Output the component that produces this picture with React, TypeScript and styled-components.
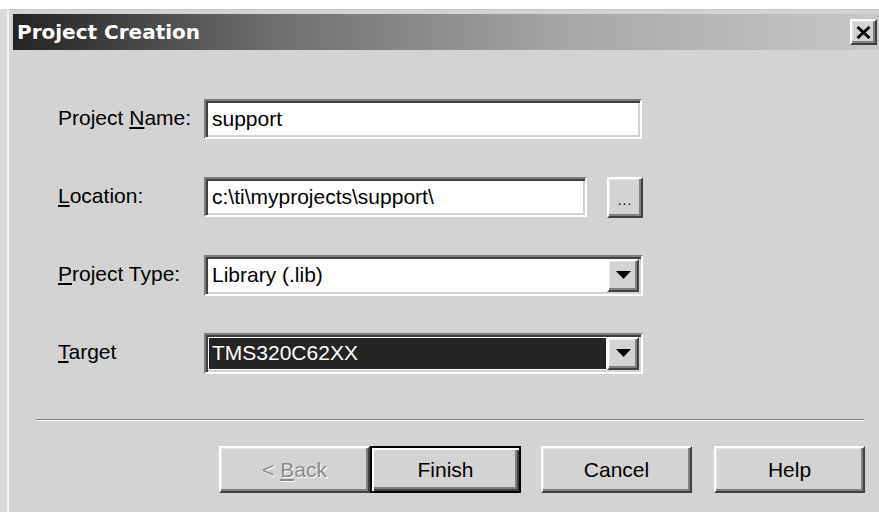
import React from "react";
import styled, { createGlobalStyle, css } from "styled-components";

const GlobalStyle = createGlobalStyle`
  html, body {
    margin: 0;
    padding: 0;
  }
  body {
    width: 879px;
    height: 512px;
    overflow: hidden;
    background: linear-gradient(#ffffff 0 9px, #d9d9d9 9px);
    font-family: "Liberation Sans", Arial, sans-serif;
    font-size: 21px;
    color: #000;
  }
`;

const face = "#d3d3d3";

const raised = css`
  border: 2px solid;
  border-color: #ffffff #404040 #404040 #ffffff;
  box-shadow: inset -2px -2px 0 #808080, inset 1px 1px 0 #e4e4e4;
  background: ${face};
`;

const sunken = css`
  border: 2px solid;
  border-color: #7c7c7c #ffffff #ffffff #7c7c7c;
  box-shadow: inset 2px 2px 0 #404040, inset -2px -2px 0 ${face};
`;

const Window = styled.div`
  box-sizing: border-box;
  width: 876px;
  height: 503px;
  margin: 0 0 0 7px;
  border-top: 1px solid #c6c6c6;
  border-left: 2px solid #f4f4f4;
  padding: 4px 3px 0 4px;
  background: ${face};
  position: relative;
  top: 9px;
`;

const TitleBar = styled.div`
  height: 36px;
  display: flex;
  align-items: center;
  justify-content: space-between;
  padding: 0 3px 0 4px;
  background: linear-gradient(to right, #232323 0%, #6e6e6e 30%, #a8a8a8 65%, #c8c8c8 100%);
`;

const TitleText = styled.span`
  font-family: "DejaVu Sans", Verdana, sans-serif;
  font-weight: bold;
  font-size: 20px;
  color: #ffffff;
  letter-spacing: 0;
  line-height: 1;
`;

const CloseButton = styled.div`
  ${raised};
  box-sizing: border-box;
  width: 27px;
  height: 26px;
  display: flex;
  align-items: center;
  justify-content: center;
`;

const DialogBody = styled.div`
  padding-top: 49px;
`;

const Form = styled.div`
  display: grid;
  grid-template-columns: 146px 439px;
  grid-auto-rows: 40px;
  row-gap: 38px;
  align-items: center;
  padding-left: 45px;
`;

const Label = styled.span`
  white-space: nowrap;
  margin-top: -3px;
`;

const TextBox = styled.div<{ $width: number }>`
  ${sunken};
  box-sizing: border-box;
  width: ${(p) => p.$width}px;
  height: 40px;
  background: #ffffff;
  display: flex;
  align-items: center;
  padding-left: 6px;
  white-space: nowrap;
`;

const FieldRow = styled.div`
  display: flex;
  align-items: center;
  gap: 20px;
`;

const BrowseButton = styled.div`
  ${raised};
  box-sizing: border-box;
  width: 36px;
  height: 41px;
  display: flex;
  justify-content: center;
  align-items: center;
  padding-top: 6px;
  font-size: 14px;
  letter-spacing: 1px;
`;

const Combo = styled.div`
  ${sunken};
  box-sizing: border-box;
  width: 439px;
  height: 41px;
  background: #ffffff;
  display: flex;
  align-items: stretch;
  padding: 2px;
`;

const ComboValue = styled.div<{ $selected?: boolean }>`
  flex: 1;
  margin: 1px;
  display: flex;
  align-items: center;
  padding-left: 3px;
  white-space: nowrap;
  ${(p) =>
    p.$selected &&
    css`
      background: #242424;
      color: #ffffff;
    `}
`;

const DropButton = styled.div`
  ${raised};
  box-sizing: border-box;
  width: 32px;
  display: flex;
  align-items: center;
  justify-content: center;
`;

const Separator = styled.div`
  width: 828px;
  margin: 46px 0 0 23px;
  border-top: 1px solid #808080;
  border-bottom: 1px solid #ffffff;
`;

const ButtonRow = styled.div`
  display: flex;
  justify-content: flex-end;
  padding-right: 15px;
  margin-top: 25px;
`;

const PushButton = styled.div<{ $gap?: number; $default?: boolean; $disabled?: boolean }>`
  box-sizing: border-box;
  width: 151px;
  height: 47px;
  margin-left: ${(p) => p.$gap ?? 0}px;
  display: flex;
  align-items: center;
  justify-content: center;
  ${raised};
  ${(p) =>
    p.$default &&
    css`
      outline: 2px solid #000;
      outline-offset: -2px;
      border-color: #000 #000 #000 #000;
      box-shadow: inset 2px 2px 0 #ffffff, inset -2px -2px 0 #404040, inset -4px -4px 0 #808080;
    `}
  ${(p) =>
    p.$disabled &&
    css`
      color: #8a8a8a;
      text-shadow: 1px 1px 0 #ffffff;
    `}
`;

const Arrow = () => (
  <svg width="15" height="8" viewBox="0 0 15 8">
    <polygon points="0,0 15,0 7.5,8" fill="#000" />
  </svg>
);

const CloseGlyph = () => (
  <svg width="15" height="13" viewBox="0 0 15 13">
    <path d="M1.5 1 L13.5 12 M13.5 1 L1.5 12" stroke="#000" strokeWidth="3" />
  </svg>
);

export default function App() {
  return (
    <>
      <GlobalStyle />
      <Window>
        <TitleBar>
          <TitleText>Project Creation</TitleText>
          <CloseButton>
            <CloseGlyph />
          </CloseButton>
        </TitleBar>
        <DialogBody>
          <Form>
            <Label>
              Project <u>N</u>ame:
            </Label>
            <TextBox $width={438}>support</TextBox>

            <Label>
              <u>L</u>ocation:
            </Label>
            <FieldRow>
              <TextBox $width={383}>c:\ti\myprojects\support\</TextBox>
              <BrowseButton>...</BrowseButton>
            </FieldRow>

            <Label>
              <u>P</u>roject Type:
            </Label>
            <Combo>
              <ComboValue>Library (.lib)</ComboValue>
              <DropButton>
                <Arrow />
              </DropButton>
            </Combo>

            <Label>
              <u>T</u>arget
            </Label>
            <Combo>
              <ComboValue $selected>TMS320C62XX</ComboValue>
              <DropButton>
                <Arrow />
              </DropButton>
            </Combo>
          </Form>

          <Separator />

          <ButtonRow>
            <PushButton $disabled>
              &lt;&nbsp;<u>B</u>ack
            </PushButton>
            <PushButton $default>Finish</PushButton>
            <PushButton $gap={20}>Cancel</PushButton>
            <PushButton $gap={22}>Help</PushButton>
          </ButtonRow>
        </DialogBody>
      </Window>
    </>
  );
}
